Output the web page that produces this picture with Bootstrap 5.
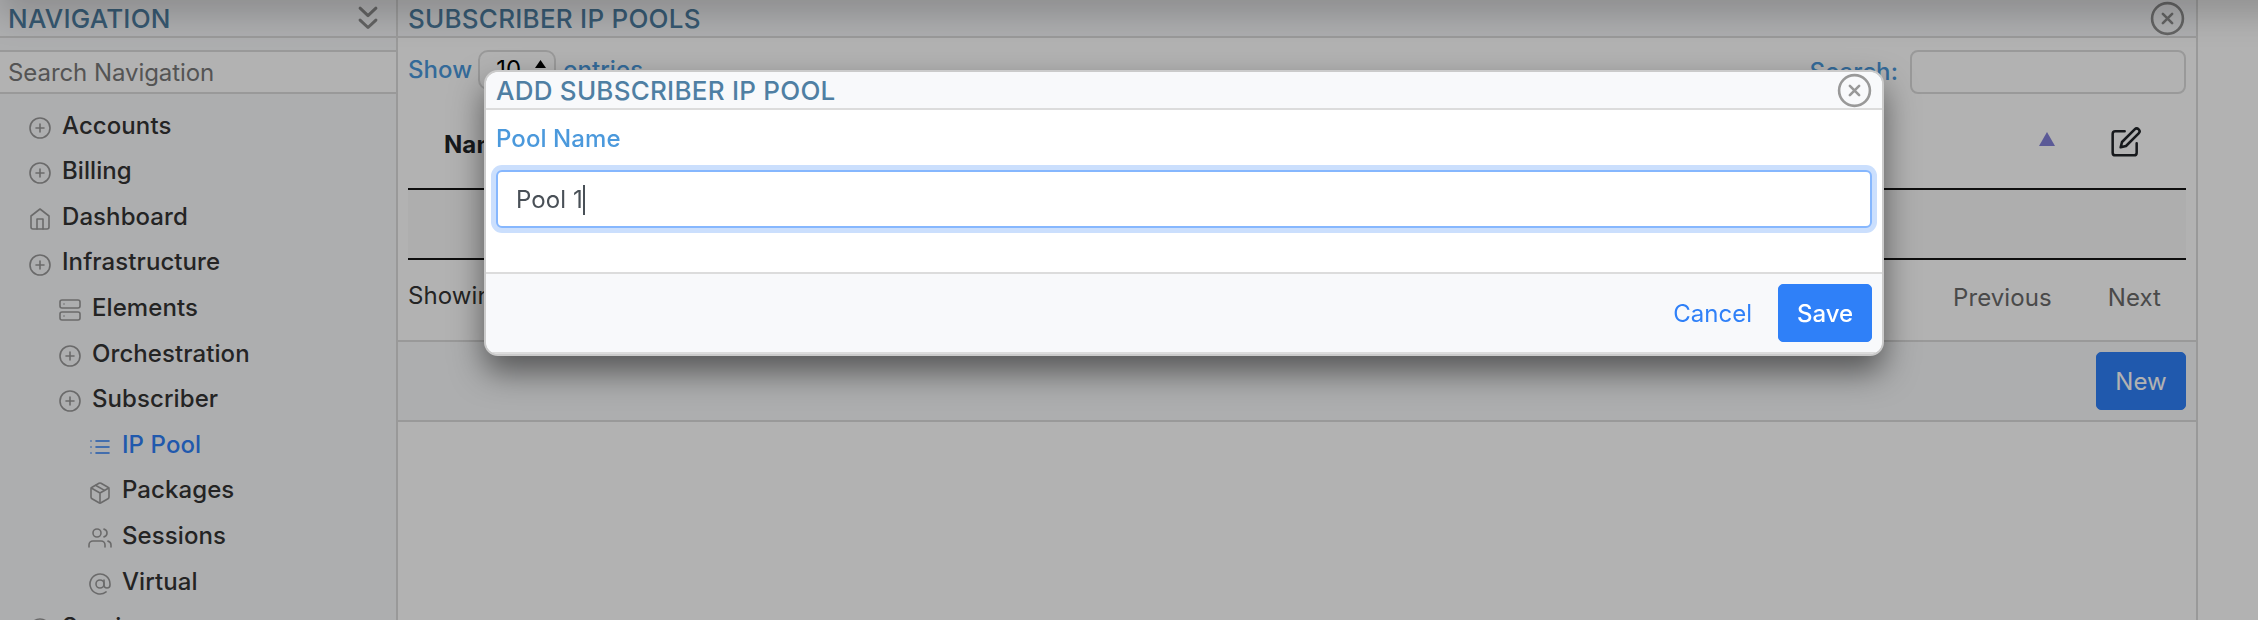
<!DOCTYPE html>
<html lang="en">
<head>
<meta charset="utf-8">
<meta name="viewport" content="width=device-width, initial-scale=1">
<title>Subscriber IP Pools</title>
<link rel="stylesheet" href="https://cdn.jsdelivr.net/npm/bootstrap@5.3.0/dist/css/bootstrap.min.css">
<style>
  :root { --line: #dcdcdc; --title: #4f7fa3; --label: #4b99dc; --accent: #2f80f8; }
  body { font-family: Inter, "Liberation Sans", sans-serif; font-size: 24px; line-height: 36px; letter-spacing: .08px; color: #343434; background: #fff; height: 620px; overflow: hidden; }
  .app-shell { height: 620px; overflow: hidden; }
  .side-pane { width: 398px; flex: none; background: #f8f9fb; border-right: 2px solid var(--line); }
  .main-pane { width: 1800px; flex: none; border-right: 2px solid var(--line); }
  .pane-head { height: 38px; flex: none; border-bottom: 2px solid var(--line); background: #f8f9fb; color: var(--title); font-size: 26px; font-weight: 500; line-height: 36px; letter-spacing: .24px; }
  .pane-head span { padding-top: 1px; }
  .feather { fill: none; stroke: currentColor; stroke-linecap: round; stroke-linejoin: round; flex: none; display: block; }
  .nav-search { margin-top: 12px; height: 44px; flex: none; border: solid var(--line); border-width: 2px 0; border-radius: 0; font-size: 24px; letter-spacing: -.07px; padding: 0 8px; background: #fff; }
  .nav-search::placeholder { color: #797979; opacity: 1; }
  .tree { padding-top: 8.6px; font-weight: 500; line-height: 45.6px; }
  .tree-item { height: 45.6px; flex: none; gap: 10px; color: #343434; }
  .tree-item svg { width: 24px; height: 24px; stroke-width: 1.6; color: #999; margin-top: 5px; }
  .tree-item.active, .tree-item.active svg { color: var(--accent); }
  .lv-1 { padding-left: 28px; } .lv-2 { padding-left: 58px; } .lv-3 { padding-left: 88px; }
  .text-label { color: var(--label); font-weight: 500; }
  .page-size { width: 78px; height: 40px; border: 2px solid var(--line); border-radius: 10px; color: #000; padding: 0 8px 0 16px; margin: 0 7px 0 6px; }
  .filter-box { width: 276px; height: 44px; border: 2px solid var(--line); border-radius: 8px; padding: 0; }
  .tools { height: 56px; padding: 12px 10px 0; }
  .pool-grid { width: 1778px; margin: 0 10px; }
  .grid-head { height: 96px; border-bottom: 2px solid #151515; color: #212529; padding: 0 44px 0 36px; }
  .grid-empty { height: 70px; background: #f9f9f9; border-bottom: 2px solid #151515; }
  .grid-foot { height: 80px; padding: 18px 35px 0 10px; }
  .pager { color: #6a6a6a; gap: 56px; padding-top: 2px; }
  .action-bar { height: 82px; border: solid var(--line); border-width: 2px 0; background: #f8f9fb; padding-right: 10px; }
  .btn-app { --bs-btn-font-size: 24px; --bs-btn-bg: var(--accent); --bs-btn-color: #fff; --bs-btn-border-color: var(--accent); height: 58px; padding: 1px 0 0; border-radius: 5px; }
  .btn-new { width: 90px; } .btn-save { width: 94px; font-weight: 500; }
  .btn-plain { --bs-btn-font-size: 24px; --bs-btn-color: var(--accent); border: 0; padding: 1px 0 0; margin-right: 26px; }
  .top-shade { position: absolute; top: -60px; left: 0; width: 2400px; height: 60px; box-shadow: 0 16px 32px rgba(0,0,0,.18); }
  .veil { position: absolute; inset: 0; background: rgba(0,0,0,.3); }
  .pool-dialog { width: 1400px; max-width: none; margin: 70px 0 0 484px; }
  .pool-content { height: 286px; border: 2px solid #cbcbcb; border-radius: 14px; box-shadow: 0 16px 32px rgba(0,0,0,.5); overflow: hidden; }
  .pool-body { height: 162px; flex: none; padding: 11px 10px 0; }
  .pool-body label { height: 49px; line-height: 36px; display: block; }
  .pool-input { height: 58px; border: 2px solid #86b7fe; border-radius: 6px; box-shadow: 0 0 0 5px #cbdffd; color: #495057; padding: 1px 0 0 18px; background: #fff; }
  .caret { width: 2px; height: 30px; background: #495057; }
  .pool-foot { height: 82px; flex: none; border-top: 2px solid var(--line); border-bottom: 2px solid var(--line); background: #f8f9fb; padding: 0 10px; }
</style>
</head>
<body>
<svg class="d-none">
  <symbol id="plus" viewBox="0 0 24 24"><circle cx="12" cy="12" r="10"/><path d="M12 8v8M8 12h8"/></symbol>
  <symbol id="home" viewBox="0 0 24 24"><path d="M3 9l9-7 9 7v11a2 2 0 0 1-2 2H5a2 2 0 0 1-2-2z"/><path d="M9 22V12h6v10"/></symbol>
  <symbol id="server" viewBox="0 0 24 24"><rect x="2" y="2" width="20" height="8" rx="2"/><rect x="2" y="14" width="20" height="8" rx="2"/><path d="M6 6h.01M6 18h.01"/></symbol>
  <symbol id="list" viewBox="0 0 24 24"><path d="M8 6h13M8 12h13M8 18h13M3 6h.01M3 12h.01M3 18h.01"/></symbol>
  <symbol id="package" viewBox="0 0 24 24"><path d="M16.5 9.4l-9-5.19M21 16V8a2 2 0 0 0-1-1.73l-7-4a2 2 0 0 0-2 0l-7 4A2 2 0 0 0 3 8v8a2 2 0 0 0 1 1.73l7 4a2 2 0 0 0 2 0l7-4A2 2 0 0 0 21 16z"/><path d="M3.27 6.96L12 12.01l8.73-5.05M12 22.08V12"/></symbol>
  <symbol id="users" viewBox="0 0 24 24"><path d="M17 21v-2a4 4 0 0 0-4-4H5a4 4 0 0 0-4 4v2"/><circle cx="9" cy="7" r="4"/><path d="M23 21v-2a4 4 0 0 0-3-3.87M16 3.13a4 4 0 0 1 0 7.75"/></symbol>
  <symbol id="at" viewBox="0 0 24 24"><circle cx="12" cy="12" r="4"/><path d="M16 8v5a3 3 0 0 0 6 0v-1a10 10 0 1 0-3.92 7.94"/></symbol>
  <symbol id="close" viewBox="0 0 24 24"><circle cx="12" cy="12" r="10"/><path d="M15 9l-6 6M9 9l6 6"/></symbol>
</svg>

<div class="app-shell d-flex position-relative">
  <aside class="side-pane d-flex flex-column">
    <div class="pane-head d-flex justify-content-between align-items-center ps-2">
      <span>NAVIGATION</span>
      <svg class="feather" width="38" height="38" viewBox="0 0 24 24" stroke-width="1.9" style="color:#8f8f8f;margin-right:9px"><path d="M7 13.300l5 4.700 5-4.700M7 5.800l5 4.700 5-4.700"/></svg>
    </div>
    <input class="form-control nav-search" placeholder="Search Navigation">
    <nav class="tree d-flex flex-column">
      <div class="tree-item lv-1 d-flex align-items-center"><svg class="feather"><use href="#plus"/></svg>Accounts</div>
      <div class="tree-item lv-1 d-flex align-items-center"><svg class="feather"><use href="#plus"/></svg>Billing</div>
      <div class="tree-item lv-1 d-flex align-items-center"><svg class="feather"><use href="#home"/></svg>Dashboard</div>
      <div class="tree-item lv-1 d-flex align-items-center"><svg class="feather"><use href="#plus"/></svg>Infrastructure</div>
      <div class="tree-item lv-2 d-flex align-items-center"><svg class="feather"><use href="#server"/></svg>Elements</div>
      <div class="tree-item lv-2 d-flex align-items-center"><svg class="feather"><use href="#plus"/></svg>Orchestration</div>
      <div class="tree-item lv-2 d-flex align-items-center"><svg class="feather"><use href="#plus"/></svg>Subscriber</div>
      <div class="tree-item lv-3 d-flex align-items-center active"><svg class="feather"><use href="#list"/></svg>IP Pool</div>
      <div class="tree-item lv-3 d-flex align-items-center"><svg class="feather"><use href="#package"/></svg>Packages</div>
      <div class="tree-item lv-3 d-flex align-items-center"><svg class="feather"><use href="#users"/></svg>Sessions</div>
      <div class="tree-item lv-3 d-flex align-items-center"><svg class="feather"><use href="#at"/></svg>Virtual</div>
      <div class="tree-item lv-1 d-flex align-items-center"><svg class="feather"><use href="#plus"/></svg>Services</div>
    </nav>
  </aside>

  <main class="main-pane">
    <div class="pane-head d-flex justify-content-between align-items-center" style="padding:0 10px 0 10px">
      <span>SUBSCRIBER IP POOLS</span>
      <svg class="feather" width="37" height="37" stroke-width="1.7" style="color:#8f8f8f"><use href="#close"/></svg>
    </div>
    <div class="tools d-flex justify-content-between align-items-start">
      <div class="d-flex align-items-center text-label">
        <span>Show</span>
        <span class="page-size d-flex justify-content-between align-items-center fw-normal">10
          <svg width="11" height="22" viewBox="0 0 11 22" fill="#000"><path d="M5.500 1L11 9H0zM5.500 21L0 13h11z"/></svg></span>
        <span>entries</span>
      </div>
      <div class="d-flex align-items-center text-label">
        <span style="margin-right:12px">Search:</span>
        <input class="form-control filter-box">
      </div>
    </div>
    <div class="pool-grid">
      <div class="grid-head d-flex align-items-center">
        <span class="fw-bold flex-grow-1" style="padding-top:8px">Name</span>
        <svg width="16" height="14" viewBox="0 0 16 14" fill="#8382d9" style="margin:-4px 55px 0 0"><path d="M8 0l8 14H0z"/></svg>
        <svg class="feather" width="32" height="32" viewBox="0 0 24 24" stroke-width="1.9" style="margin-top:2px"><path d="M11 4H4a2 2 0 0 0-2 2v14a2 2 0 0 0 2 2h14a2 2 0 0 0 2-2v-7"/><path d="M18.500 2.500a2.121 2.121 0 0 1 3 3L12 15l-4 1 1-4 9.500-9.500z"/></svg>
      </div>
      <div class="grid-empty d-flex align-items-center justify-content-center">No data available in table</div>
    </div>
    <div class="grid-foot d-flex justify-content-between align-items-start">
      <div>Showing 0 to 0 of 0 entries</div>
      <div class="pager d-flex"><span>Previous</span><span>Next</span></div>
    </div>
    <div class="action-bar d-flex justify-content-end align-items-center">
      <button class="btn btn-primary btn-app btn-new">New</button>
    </div>
  </main>
  <div class="top-shade"></div>
  <div class="veil"></div>
</div>

<div class="modal d-block overflow-hidden" tabindex="-1">
  <div class="modal-dialog pool-dialog">
    <div class="modal-content pool-content">
      <div class="pane-head d-flex justify-content-between align-items-center" style="padding:0 9px 0 10px">
        <span>ADD SUBSCRIBER IP POOL</span>
        <svg class="feather" width="37" height="37" stroke-width="1.7" style="color:#999"><use href="#close"/></svg>
      </div>
      <div class="pool-body">
        <label class="text-label">Pool Name</label>
        <div class="pool-input d-flex align-items-center"><span>Pool 1</span><span class="caret"></span></div>
      </div>
      <div class="pool-foot d-flex justify-content-end align-items-center">
        <button class="btn btn-plain">Cancel</button>
        <button class="btn btn-primary btn-app btn-save">Save</button>
      </div>
    </div>
  </div>
</div>
<script src="https://cdn.jsdelivr.net/npm/bootstrap@5.3.0/dist/js/bootstrap.bundle.min.js"></script>
</body>
</html>
